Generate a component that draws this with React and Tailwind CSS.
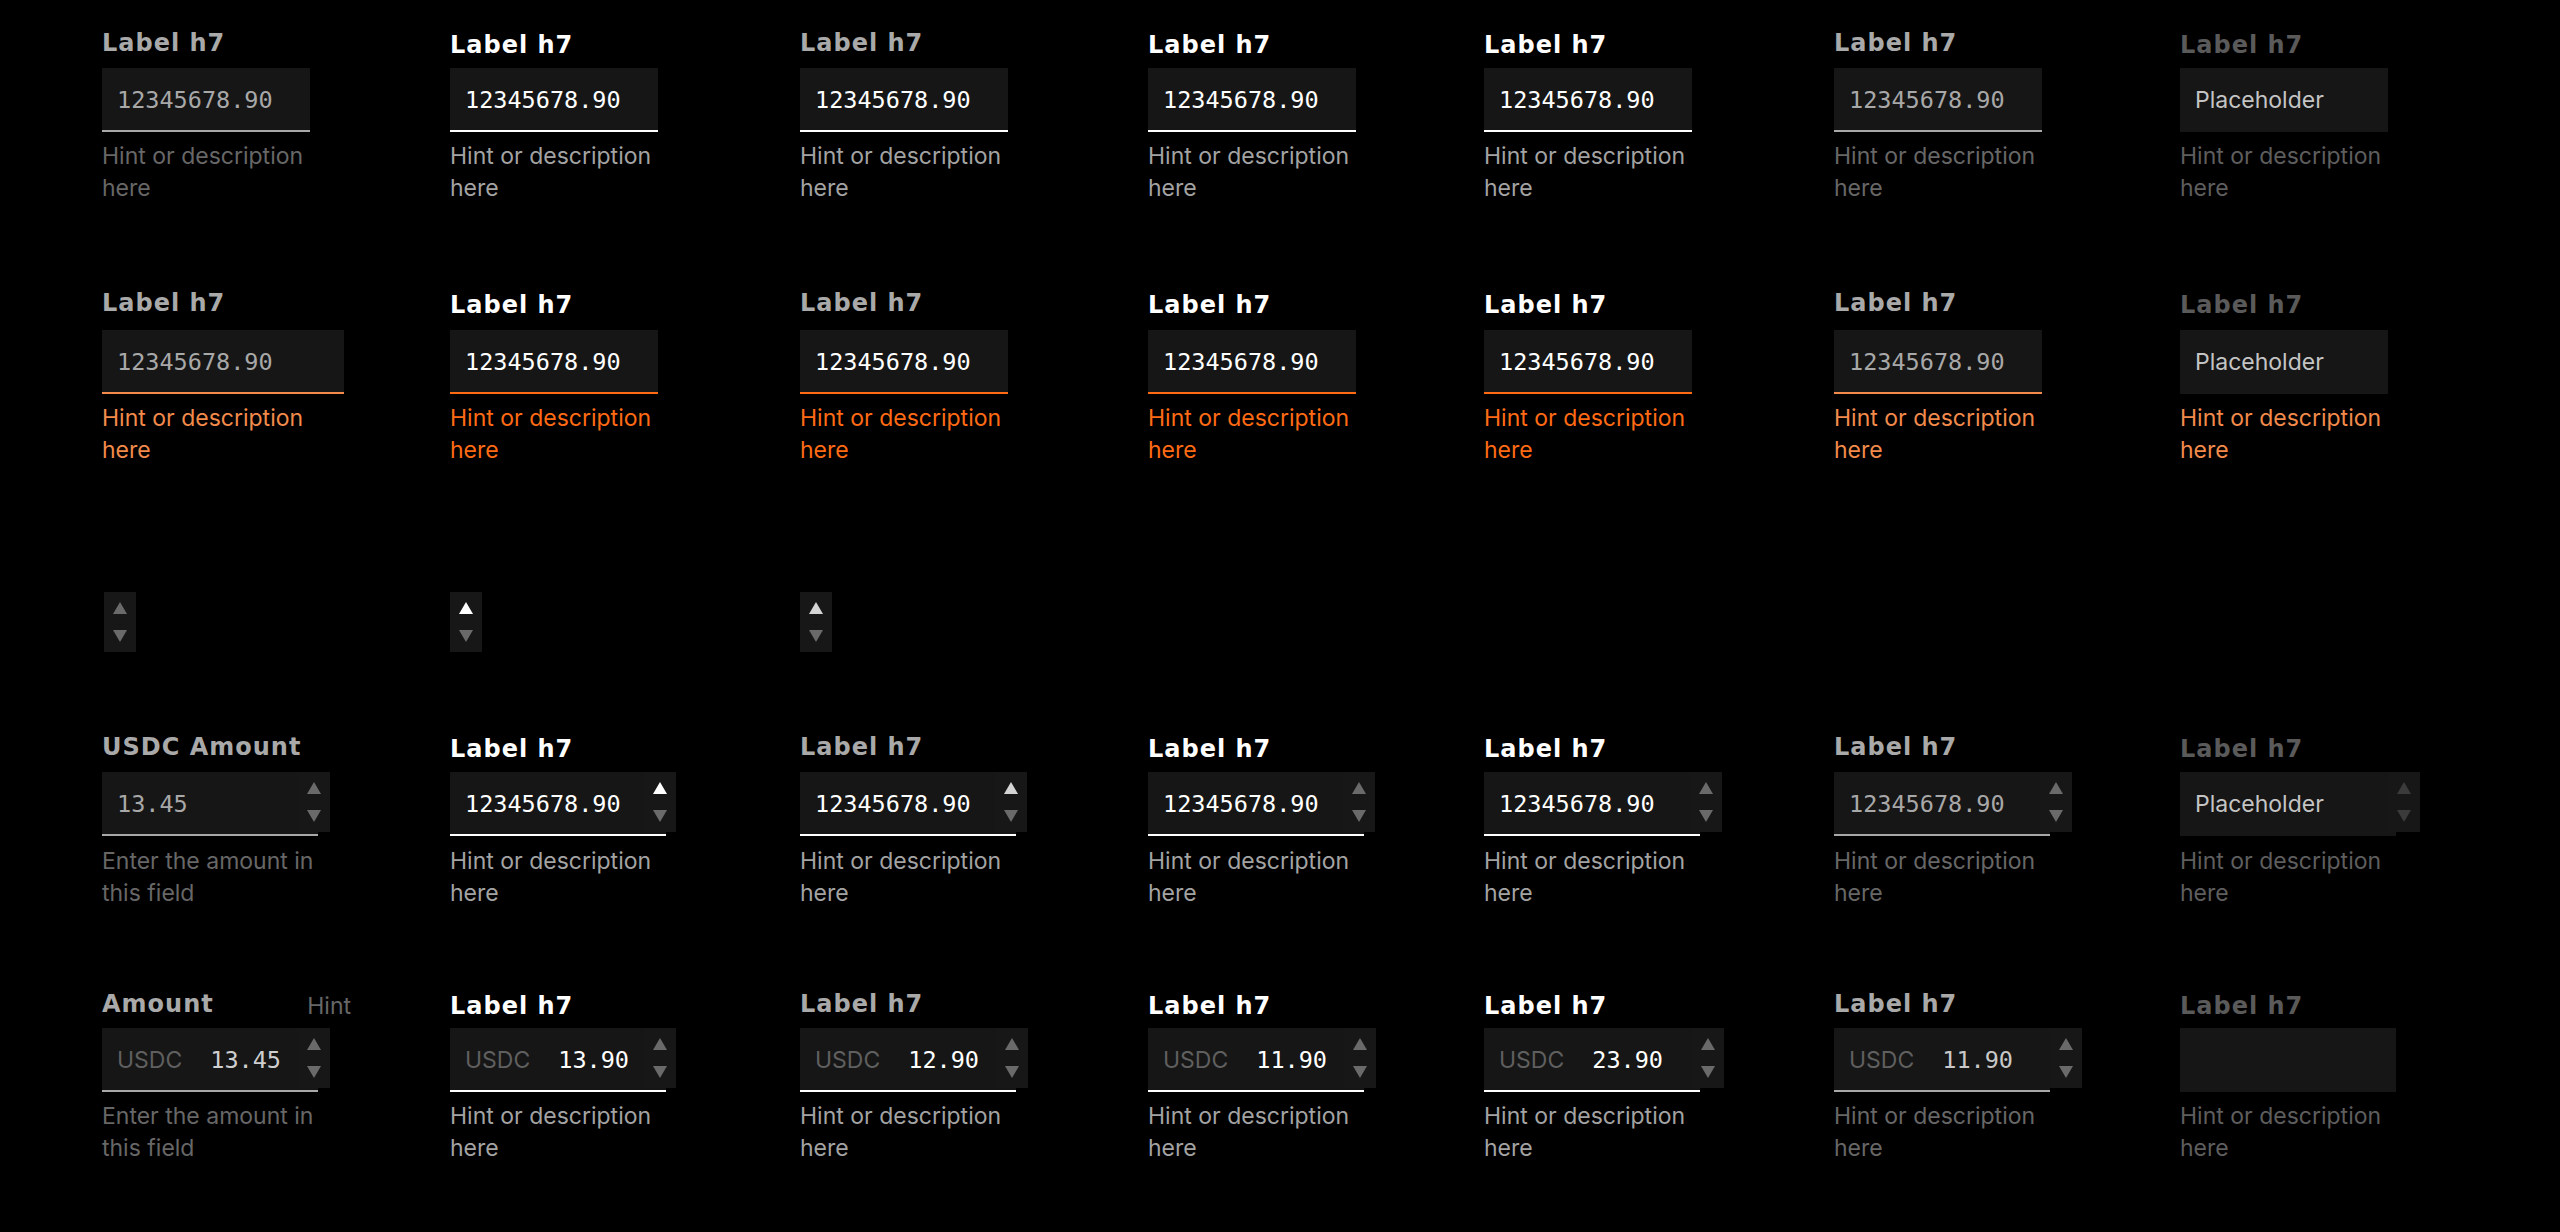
const LABEL =
  "h-[24px] font-['DejaVu_Sans',sans-serif] text-[24px] font-bold leading-[24px] tracking-[1px] whitespace-nowrap";
const HINT = "w-[240px] font-['Inter',sans-serif] text-[23px] leading-[32px]";
const MONO = "font-['DejaVu_Sans_Mono',monospace] text-[23.5px] leading-[28px]";
const SANS = "font-['Inter',sans-serif] text-[23px] leading-[28px]";

const GRAY = {
  label: "text-[#a9a9a9]",
  val: "text-[#a8a8a8]",
  line: "border-[#a8a8a8]",
  hint: "text-[#676767]",
  err: "border-[#f28a4b]",
  errHint: "text-[#f28a4b]",
};
const WHITE = {
  label: "text-white pt-[2px]",
  val: "text-white",
  line: "border-white",
  hint: "text-[#a3a3a3]",
  err: "border-[#ff6a14]",
  errHint: "text-[#ff6a14]",
};
const FILLED = { ...WHITE, label: "text-[#a9a9a9]" };
const DISABLED = {
  label: "text-[#5a5a5a] pt-[2px]",
  val: "text-[#c4c4c4]",
  line: "border-[#161616]",
  hint: "text-[#5e5e5e]",
  err: "border-[#161616]",
  errHint: "text-[#f28a4b]",
};

const cols = [GRAY, WHITE, FILLED, WHITE, WHITE, GRAY, DISABLED];

const GRID =
  "grid grid-cols-[348px_350px_348px_336px_350px_346px_1fr] pl-[102px]";

function Arrow({ dir, fill }) {
  return (
    <svg width="14" height="12" viewBox="0 0 14 12" className={fill}>
      {dir === "up" ? <path d="M7 0L14 12H0Z" /> : <path d="M0 0H14L7 12Z" />}
    </svg>
  );
}

function Stepper({ up = "fill-[#6a6a6a]", down = "fill-[#6a6a6a]", className = "" }) {
  return (
    <div
      className={`flex h-[60px] w-[32px] shrink-0 flex-col items-center justify-between bg-[#171717] py-[10px] ${className}`}
    >
      <Arrow dir="up" fill={up} />
      <Arrow dir="down" fill={down} />
    </div>
  );
}

function Field({ width = "w-[208px]", line, children }) {
  return (
    <div
      className={`flex h-[64px] shrink-0 items-center border-b-2 bg-[#161616] pl-[15px] pt-[2px] ${width} ${line}`}
    >
      {children}
    </div>
  );
}

function Value({ c, text }) {
  if (c === DISABLED) return <span className={`${SANS} ${c.val}`}>Placeholder</span>;
  return <span className={`${MONO} ${c.val}`}>{text}</span>;
}

// row 4: number inputs with stepper
const row4 = [
  { label: "USDC Amount", value: "13.45", ml: "-ml-[20px]", hint: "Enter the amount in this field" },
  { ml: "-ml-[22px]", up: "fill-white" },
  { ml: "-ml-[21px]", up: "fill-[#d4d4d4]" },
  { ml: "-ml-[21px]" },
  { ml: "-ml-[10px]" },
  { ml: "-ml-[10px]" },
  { ml: "-ml-[8px]", up: "fill-[#3b3b3b]", down: "fill-[#3b3b3b]" },
];

// row 5: currency inputs
const row5 = [
  { label: "Amount", value: "13.45", val: "text-[#cfcfcf]", ml: "-ml-[20px]", hint: "Enter the amount in this field" },
  { value: "13.90", ml: "-ml-[22px]" },
  { value: "12.90", ml: "-ml-[20px]" },
  { value: "11.90", ml: "-ml-[20px]" },
  { value: "23.90", ml: "-ml-[8px]" },
  { value: "11.90", val: "text-[#c8c8c8]", ml: "ml-0" },
  { empty: true },
];

export default function App() {
  return (
    <div className="min-h-screen w-full bg-black pt-[31px]">
      {/* default */}
      <div className={GRID}>
        {cols.map((c, i) => (
          <div key={i} className="flex flex-col">
            <div className={`${LABEL} ${c.label} mb-[13px]`}>Label h7</div>
            <Field line={c.line}>
              <Value c={c} text="12345678.90" />
            </Field>
            <div className={`${HINT} ${c.hint} mt-[8px]`}>Hint or description here</div>
          </div>
        ))}
      </div>

      {/* error */}
      <div className={`${GRID} mt-[87px]`}>
        {cols.map((c, i) => (
          <div key={i} className="flex flex-col">
            <div className={`${LABEL} ${c.label} mb-[15px]`}>Label h7</div>
            <Field width={i === 0 ? "w-[242px]" : "w-[208px]"} line={c.err}>
              <Value c={c} text="12345678.90" />
            </Field>
            <div className={`${HINT} ${c.errHint} mt-[8px]`}>Hint or description here</div>
          </div>
        ))}
      </div>

      {/* stepper alone */}
      <div className={`${GRID} mt-[126px]`}>
        <div>
          <Stepper className="ml-[2px]" />
        </div>
        <div>
          <Stepper up="fill-white" />
        </div>
        <div>
          <Stepper up="fill-[#d4d4d4]" />
        </div>
      </div>

      {/* number */}
      <div className={`${GRID} mt-[83px]`}>
        {cols.map((c, i) => {
          const r = row4[i];
          return (
            <div key={i} className="flex flex-col">
              <div className={`${LABEL} ${c.label} mb-[13px]`}>{r.label || "Label h7"}</div>
              <div className="flex items-start">
                <Field width="w-[216px]" line={c.line}>
                  <Value c={c} text={r.value || "12345678.90"} />
                </Field>
                <Stepper className={r.ml} up={r.up} down={r.down} />
              </div>
              <div className={`${HINT} ${c.hint} mt-[9px]`}>{r.hint || "Hint or description here"}</div>
            </div>
          );
        })}
      </div>

      {/* currency */}
      <div className={`${GRID} mt-[83px]`}>
        {cols.map((c, i) => {
          const r = row5[i];
          return (
            <div key={i} className="flex flex-col">
              <div className="mb-[12px] flex w-[249px] items-start justify-between">
                <div className={`${LABEL} ${c.label}`}>{r.label || "Label h7"}</div>
                {i === 0 && (
                  <div className="h-[24px] pt-[2px] font-['Inter',sans-serif] text-[23px] leading-[24px] text-[#676767]">
                    Hint
                  </div>
                )}
              </div>
              <div className="flex items-start">
                {r.empty ? (
                  <Field width="w-[216px]" line={c.line} />
                ) : (
                  <>
                    <Field width="w-[216px]" line={c.line}>
                      <span className={`${SANS} text-[#5f5f5f]`}>USDC</span>
                      <span className={`${MONO} ${r.val || c.val} ml-[28px]`}>{r.value}</span>
                    </Field>
                    <Stepper className={r.ml} />
                  </>
                )}
              </div>
              <div className={`${HINT} ${c.hint} mt-[8px]`}>{r.hint || "Hint or description here"}</div>
            </div>
          );
        })}
      </div>
    </div>
  );
}
